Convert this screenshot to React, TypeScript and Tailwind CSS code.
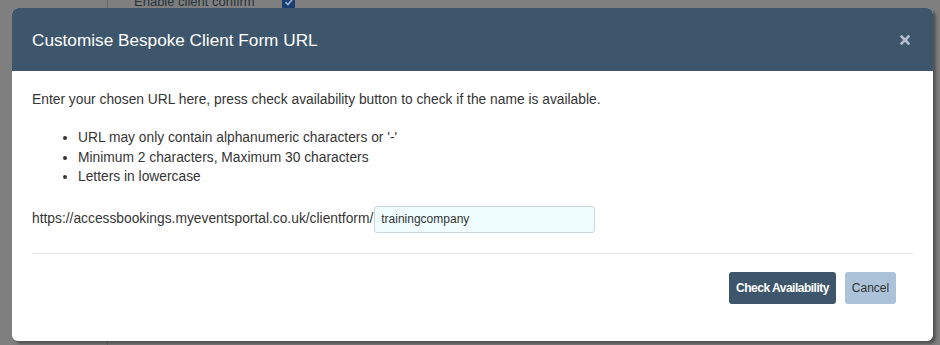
import React from "react";

export default function App() {
  const font = { fontFamily: '"Liberation Sans", Arial, sans-serif' } as React.CSSProperties;
  return (
    <div className="relative w-[940px] h-[345px] overflow-hidden bg-[#7f7f7f]" style={font}>
      {/* Background page (dimmed) */}
      <div className="flex h-full">
        <div className="w-[108px] h-full border-r border-[#6a6a6a]" />
        <div className="flex-1 flex flex-col justify-between">
          <div className="flex items-center mt-[-7px] pl-[26px] h-[18px]">
            <span className="text-[13px] text-[#27323a] w-[148px]">Enable client confirm</span>
            <span className="w-[13px] h-[13px] bg-[#1b3f73] rounded-[2px] flex items-center justify-center">
              <svg width="10" height="10" viewBox="0 0 10 10">
                <path d="M1.5 5.2 L4 7.6 L8.6 2" stroke="#9fb4cf" strokeWidth="1.6" fill="none" />
              </svg>
            </span>
          </div>
          <div className="pl-[175px] mb-[-12px] h-[16px] text-[13px] text-[#27323a]">
            (Hold Ctrl key to select multiple fields)
          </div>
        </div>
      </div>

      {/* Modal */}
      <div className="absolute left-[12px] top-[8px] w-[921px] h-[333px] bg-white rounded-[6px] overflow-hidden shadow-[3px_3px_3px_rgba(0,0,0,0.35)] flex flex-col">
        <div className="h-[63px] bg-[#3e566b] flex items-center justify-between pl-[20px] pr-[23px] shrink-0">
          <span className="text-[17.2px] text-white leading-none pt-[2px]">Customise Bespoke Client Form URL</span>
          <svg width="10" height="10" viewBox="0 0 10 10" className="mt-[1px]">
            <path d="M1.5 1.5 L8.5 8.5 M8.5 1.5 L1.5 8.5" stroke="#b3c0cc" strokeWidth="2.6" strokeLinecap="square" />
          </svg>
        </div>
        <div className="px-[20px] pt-[20px] text-[13.8px] text-[#353535]">
          <p className="leading-[18px]">
            Enter your chosen URL here, press check availability button to check if the name is available.
          </p>
          <ul className="list-disc pl-[46px] mt-[19px] leading-[19.5px]">
            <li>URL may only contain alphanumeric characters or '-'</li>
            <li>Minimum 2 characters, Maximum 30 characters</li>
            <li>Letters in lowercase</li>
          </ul>
          <div className="flex items-center mt-[19px]">
            <span>https://accessbookings.myeventsportal.co.uk/clientform/</span>
            <div className="ml-[1px] w-[221px] h-[27px] bg-[#effdff] border border-[#c8d6de] rounded-[3px] flex items-center pl-[6px] text-[12px] text-[#333]">
              trainingcompany
            </div>
          </div>
          <div className="mt-[20px] border-t border-[#e5e5e5]" />
          <div className="flex justify-end gap-[9px] mt-[18px] pr-[17px]">
            <button className="h-[32px] w-[107px] bg-[#3e566b] rounded-[3px] text-white text-[12px] font-bold tracking-[-0.5px]">
              Check Availability
            </button>
            <button className="h-[32px] w-[51px] bg-[#abc2d9] rounded-[3px] text-[#333] text-[12px]">
              Cancel
            </button>
          </div>
        </div>
      </div>
    </div>
  );
}
